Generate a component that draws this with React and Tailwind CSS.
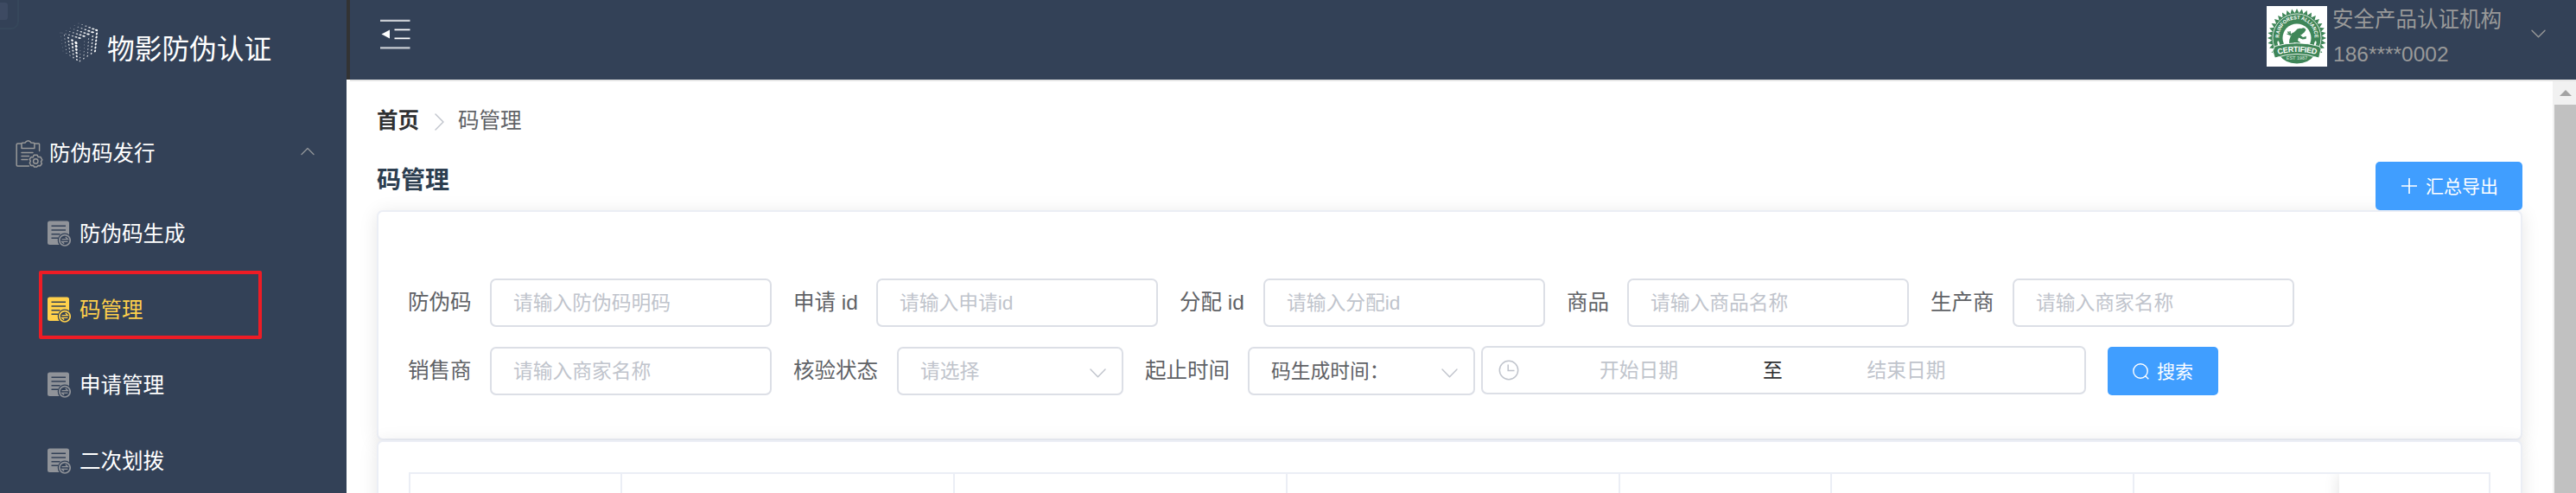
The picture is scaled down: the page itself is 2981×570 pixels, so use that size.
import React from "react";

const SANS = "font-['Liberation_Sans','Noto_Sans_CJK_SC',sans-serif]";

function lerp(a, b, t) {
  return [a[0] + (b[0] - a[0]) * t, a[1] + (b[1] - a[1]) * t];
}

function faceDots(a, b, c, d, cols, rows, size, shape) {
  const dots = [];
  for (let i = 0; i < cols; i++) {
    for (let j = 0; j < rows; j++) {
      const u = i / (cols - 1);
      const v = j / (rows - 1);
      const [x, y] = lerp(lerp(a, b, u), lerp(c, d, u), v);
      const r = size(u, v);
      dots.push({ x, y, rx: r * shape[0], ry: r * shape[1], rot: shape[2], o: Math.min(1, 0.35 + r * 0.5) });
    }
  }
  return dots;
}

const cubeDots = [
  ...faceDots([22, 1], [43, 9], [3, 12], [23, 18], 6, 5, (u, v) => 0.4 + 0.95 * u * (1 - 0.2 * v), [1.5, 0.8, 8]),
  ...faceDots([1, 12], [19, 23.5], [4, 33], [20, 43], 5, 6, (u, v) => 0.35 + 1.3 * u * (1 - 0.5 * v), [0.9, 1.15, -35]),
  ...faceDots([24, 25], [43, 13], [23.5, 44.5], [41, 33], 5, 6, (u, v) => 0.25 + 1.05 * Math.max(u * 0.95, v * 0.6), [0.8, 1.15, 30]),
];

function CubeLogo() {
  return (
    <svg className="h-[46px] w-[44px] shrink-0" viewBox="0 0 44 46" fill="#fff">
      {cubeDots.map((p, i) => (
        <ellipse key={i} cx={p.x} cy={p.y} rx={p.rx} ry={p.ry} opacity={p.o} transform={`rotate(${p.rot} ${p.x} ${p.y})`} />
      ))}
    </svg>
  );
}

function ClipboardIcon() {
  return (
    <svg className="h-[32px] w-[32px] shrink-0" viewBox="0 0 32 32" fill="none" stroke="#999" strokeWidth="1.5" strokeLinejoin="round" strokeLinecap="round">
      <path d="M6.5 4H2.5Q1.2 4 1.2 5.3V28.7Q1.2 30 2.5 30H15.5M22.5 4H26.8Q27.6 4 27.6 4.8V12.5" />
      <path d="M7 9.6V4.2Q7 3.4 7.8 3.3L11 3Q12.5 0.8 14.6 0.8Q16.7 0.8 18 3L21 3.3Q21.900 3.4 21.900 4.2V9.6Z" />
      <path d="M7 14.6H20M7 18.5H15.5M7 22.5H14" />
      <path d="M21.2 17.2H25L26.2 19.6L29 19.6L30.8 22.8L29.4 25L30.4 27.2L28.5 29.7L26 29.4L24.6 31H21.6L20.4 29.2L17.900 29.4L16.3 26.5L17.3 24.3L16.3 22L18 19.6L20.3 19.7Z" />
      <circle cx="23.3" cy="24.4" r="2.7" />
    </svg>
  );
}

function DocIcon({ color }) {
  return (
    <svg className="h-[30px] w-[27px] shrink-0" viewBox="0 0 27 30">
      <rect x="0" y="0.5" width="25" height="27.5" rx="2.5" fill={color} />
      <path d="M4.5 6.3H21M4.5 11H21M4.5 15.8H14.5M4.5 20.3H12" stroke="#334157" strokeWidth="1.5" />
      <circle cx="20" cy="22.8" r="8.3" fill="#334157" />
      <circle cx="20" cy="22.8" r="6.2" fill="none" stroke={color} strokeWidth="1.7" />
      <path d="M16.5 21.7H23.5L20.8 19M23.5 24.3H16.5L19.2 26.8" fill="none" stroke={color} strokeWidth="1.3" />
    </svg>
  );
}

function Chevron({ d, className, color, vb }) {
  return (
    <svg className={className} viewBox={vb} fill="none" stroke={color} strokeWidth="1.4" strokeLinecap="round" strokeLinejoin="round">
      <path d={d} />
    </svg>
  );
}

function SelectArrow() {
  return <Chevron className="mt-[5px] h-[11px] w-[19px]" vb="0 0 19 11" d="M1 1L9.5 9.7L18 1" color="#c0c4cc" />;
}

function MenuItem({ label, active }) {
  return (
    <li className={`flex h-[87.5px] items-center pl-[55px] text-[24.5px] leading-none ${active ? "text-[#ffd04b]" : "text-white"}`}>
      <DocIcon color={active ? "#ffd04b" : "#909399"} />
      <span className="ml-[10px] mt-[2px]">{label}</span>
    </li>
  );
}

function Sidebar() {
  return (
    <aside className="relative h-[570px] w-[401px] shrink-0 overflow-hidden bg-[#334157]">
      <div className="absolute -left-[14px] -top-[10px] h-[44px] w-[36px] rounded-[9px] border-2 border-[#36475b]" />
      <div className="absolute -left-[6px] top-[3px] h-[20px] w-[15px] rounded-[3px] bg-[#3d4a62]" />
      <div className="flex h-[98px] items-center pl-[69px]">
        <CubeLogo />
        <h1 className="ml-[11px] mt-[18px] text-[31.7px] leading-none text-white">物影防伪认证</h1>
      </div>
      <div className="mt-[36px] flex h-[87.5px] items-center pl-[18px] pr-[37px] text-[24.5px] leading-none text-white">
        <ClipboardIcon />
        <span className="ml-[7px] mt-[1px] flex-1">防伪码发行</span>
        <Chevron className="mt-[-5px] h-[10px] w-[16px]" vb="0 0 16 10" d="M1 8.5L8 1.5L15 8.5" color="#909399" />
      </div>
      <ul className="mt-[5px]">
        <MenuItem label="防伪码生成" />
        <MenuItem label="码管理" active />
        <MenuItem label="申请管理" />
        <MenuItem label="二次划拨" />
      </ul>
      <div className="absolute left-[45px] top-[313px] h-[79px] w-[258px] rounded-[2px] border-4 border-[#ee1c25]" />
    </aside>
  );
}

const teeth = Array.from({ length: 36 }, (_, i) => i)
  .flatMap((i) => {
    const p = (deg, r) => {
      const a = (deg * Math.PI) / 180;
      return `${(35 + r * Math.cos(a)).toFixed(1)},${(37 + r * Math.sin(a)).toFixed(1)}`;
    };
    return [p(i * 10, 34), p(i * 10 + 5, 29)];
  })
  .join(" ");

function Seal() {
  return (
    <svg className="h-[70px] w-[70px] shrink-0 bg-white" viewBox="0 0 70 70">
      <defs>
        <path id="sealArc" d="M15.5 42A20.5 20.5 0 1 1 54.5 42" />
        <path id="sealBand" d="M10 57Q35 49 61 57" />
      </defs>
      <polygon points={teeth} fill="#3f8658" />
      <circle cx="35" cy="37" r="27.5" fill="#3f8658" />
      <circle cx="35" cy="37" r="28" fill="none" stroke="#fff" strokeWidth="0.8" />
      <rect x="0" y="59" width="70" height="11" fill="#fff" />
      <path d="M15 57Q35 51 55 57Q49 66 35 66.5Q21 66 15 57Z" fill="#3f8658" />
      <circle cx="35" cy="37" r="16.5" fill="#fff" />
      <path d="M26 43Q26 34 33 29Q36 25 40 26Q44 24 45.5 27.5L43.5 30.5Q41 33 39 33.5L42 36L46 35L45.5 38L41.5 38.5L37 36.5L36 40L39 42L38.5 45L35 43L32 42L30 45Z" fill="#3f8658" />
      <path d="M31 31L27.5 33.5L27 29M27.5 33.5L23.5 32M27.5 33.5L24.5 29.5" stroke="#3f8658" strokeWidth="1.3" fill="none" />
      <path d="M13 45Q11.5 42 13 40Q15.5 42 15 45.5ZM57 45Q58.5 42 57 40Q54.5 42 55 45.5Z" fill="#fff" />
      <path d="M9.5 46.5Q35 39 60.5 46.5L63 49.5L60.5 60Q35 51 9.5 60L7 52Z" fill="#3f8658" stroke="#fff" strokeWidth="0.9" />
      <text fontSize="6" fontWeight="700" fill="#fff" fontFamily="Liberation Sans, sans-serif">
        <textPath href="#sealArc" startOffset="50%" textAnchor="middle" textLength="66" lengthAdjust="spacingAndGlyphs">RAINFOREST ALLIANCE</textPath>
      </text>
      <text fontSize="9" fontWeight="700" fill="#fff" fontFamily="Liberation Sans, sans-serif">
        <textPath href="#sealBand" startOffset="50%" textAnchor="middle" textLength="45">CERTIFIED</textPath>
      </text>
      <text x="35" y="62" fontSize="5.5" fontWeight="700" fill="#b7d3c0" textAnchor="middle" fontFamily="Liberation Sans, sans-serif">EST 1987</text>
    </svg>
  );
}

function Header() {
  return (
    <header className="flex h-[92px] border-l-4 border-[#333] bg-[#334157]">
      <svg className="ml-[35px] mt-[22px] h-[36px] w-[35px]" viewBox="0 0 35 36">
        <path d="M0 1.8H34.5M0 33.3H34.5" stroke="#c8ccd2" strokeWidth="2.2" />
        <path d="M16.5 12.3H34.5M16.5 22.4H34.5" stroke="#fff" strokeWidth="1.8" />
        <path d="M1.5 17.5L11 12.5V22.5Z" fill="#fff" />
      </svg>
      <div className="ml-auto mr-[35px] flex">
        <div className="mt-[7px]">
          <Seal />
        </div>
        <div className="ml-[6px] flex w-[198px] flex-col pt-[3px] text-[24.5px] leading-[40px] text-[#999]">
          <span className="whitespace-nowrap">安全产品认证机构</span>
          <span className="pl-[1px]">186****0002</span>
        </div>
        <Chevron className="ml-[32px] mt-[34px] h-[10px] w-[17px]" vb="0 0 17 10" d="M1 1.3L8.5 8.7L16 1.3" color="#999" />
      </div>
    </header>
  );
}

function Label({ children, w }) {
  return <span className={`-ml-px mr-px shrink-0 whitespace-nowrap text-[24.5px] leading-[56px] text-[#606266] ${w}`}>{children}</span>;
}

function Field({ label, w, placeholder }) {
  return (
    <div className="flex">
      <Label w={w}>{label}</Label>
      <div className="flex h-[56px] w-[326px] items-center rounded-[7px] border-2 border-[#dcdfe6] bg-white pl-[25px] text-[22.75px] leading-none text-[#c0c4cc]">
        <span>{placeholder}</span>
      </div>
    </div>
  );
}

function Select({ value, className }) {
  return (
    <div className={`flex h-[56px] items-center justify-between rounded-[7px] border-2 border-[#dcdfe6] bg-white pl-[25px] pr-[18px] text-[22.75px] leading-none ${className}`}>
      <span>{value}</span>
      <SelectArrow />
    </div>
  );
}

function DateRange() {
  return (
    <div className="-mt-px ml-[7px] flex h-[56px] w-[700px] items-center rounded-[7px] border-2 border-[#dcdfe6] bg-white pl-[18px] text-[22.75px] leading-none text-[#c0c4cc]">
      <svg className="h-[24px] w-[24px]" viewBox="0 0 24 24" fill="none" stroke="#c0c4cc" strokeWidth="1.5">
        <circle cx="12" cy="12" r="10.7" />
        <path d="M11.2 5.5V12.6H18.5" />
      </svg>
      <span className="w-[282px] pr-[5px] text-center">开始日期</span>
      <span className="w-[23px] text-[#303133]">至</span>
      <span className="w-[306px] pr-[20px] text-center">结束日期</span>
    </div>
  );
}

function SearchCard() {
  return (
    <section className="h-[266px] rounded-[7px] border-2 border-[#ebeef5] bg-white pl-[35px] pt-[77px] shadow-[0_3.5px_21px_rgba(0,0,0,0.1)]">
      <div className="flex gap-[26px]">
        <Field label="防伪码" w="w-[94px]" placeholder="请输入防伪码明码" />
        <Field label="申请 id" w="w-[95px]" placeholder="请输入申请id" />
        <Field label="分配 id" w="w-[96px]" placeholder="请输入分配id" />
        <Field label="商品" w="w-[69px]" placeholder="请输入商品名称" />
        <Field label="生产商" w="w-[94px]" placeholder="请输入商家名称" />
      </div>
      <div className="mt-[23px] flex gap-[26px]">
        <Field label="销售商" w="w-[94px]" placeholder="请输入商家名称" />
        <div className="flex">
          <Label w="w-[119px]">核验状态</Label>
          <Select value="请选择" className="w-[262px] text-[#c0c4cc]" />
        </div>
        <div className="flex">
          <Label w="w-[118px]">起止时间</Label>
          <Select value="码生成时间：" className="w-[263px] text-[#606266]" />
          <DateRange />
        </div>
        <button className="-ml-px flex h-[56px] w-[128px] items-center rounded-[5px] bg-[#409eff] pl-[29px] text-[21px] leading-none text-white">
          <svg className="h-[19px] w-[19px]" viewBox="0 0 19 19" fill="none" stroke="#fff" strokeWidth="1.4">
            <circle cx="9" cy="9" r="8.2" />
            <path d="M14.5 14.5L18.3 18.3" />
          </svg>
          <span className="ml-[9px] whitespace-nowrap">搜索</span>
        </button>
      </div>
    </section>
  );
}

const columns = ["w-[245px]", "w-[385px]", "w-[385px]", "w-[385px]", "w-[245px]", "w-[350px]"];

function TableCard() {
  return (
    <section className="h-[120px] rounded-[7px] border-2 border-[#ebeef5] bg-white pl-[35px] pr-[35px] pt-[35px] shadow-[0_3.5px_21px_rgba(0,0,0,0.1)]">
      <div className="flex h-[80px] overflow-hidden border-2 border-[#ebeef5]">
        {columns.map((w, i) => (
          <div key={i} className={`h-full shrink-0 border-r-2 border-[#ebeef5] ${w}`} />
        ))}
        <div className="ml-auto h-full w-[173px] bg-white shadow-[0_0_17px_rgba(0,0,0,0.12)]" />
      </div>
    </section>
  );
}

function Scrollbar() {
  return (
    <div className="flex w-[27px] shrink-0 flex-col bg-[#f1f1f1] pl-[2px]">
      <div className="flex h-[27px] items-center justify-center">
        <svg className="h-[7px] w-[14px]" viewBox="0 0 14 7">
          <path d="M0 7L7 0L14 7Z" fill="#a3a3a3" />
        </svg>
      </div>
      <div className="flex-1 bg-[#c1c1c1]" />
    </div>
  );
}

export default function App() {
  return (
    <div className={`flex h-[570px] w-[2981px] overflow-hidden bg-white ${SANS}`}>
      <Sidebar />
      <div className="flex min-w-0 flex-1 flex-col">
        <Header />
        <div className="ml-[4px] h-[2px] shrink-0 bg-[#e6e6e6]" />
        <div className="flex min-h-0 flex-1">
          <main className="min-w-0 flex-1 overflow-hidden pl-[35px] pr-[35px] pt-[33px]">
            <nav className="flex h-[27px] items-center text-[24.5px] leading-none">
              <span className="font-bold text-[#303133]">首页</span>
              <Chevron className="ml-[18px] h-[20px] w-[11px]" vb="0 0 11 20" d="M1 1L10 10L1 19" color="#c0c4cc" />
              <span className="ml-[16px] text-[#606266]">码管理</span>
            </nav>
            <div className="mt-[33px] flex h-[56px] justify-between">
              <h2 className="pt-[6px] text-[28px] font-bold leading-[32px] text-[#2c3e50]">码管理</h2>
              <button className="relative z-10 flex h-[56px] w-[170px] items-center rounded-[5px] bg-[#409eff] pl-[30px] text-[21px] leading-none text-white">
                <svg className="h-[18px] w-[18px]" viewBox="0 0 18 18" stroke="#fff" strokeWidth="1.6">
                  <path d="M9 0V18M0 9H18" />
                </svg>
                <span className="ml-[10px]">汇总导出</span>
              </button>
            </div>
            <SearchCard />
            <TableCard />
          </main>
          <Scrollbar />
        </div>
      </div>
    </div>
  );
}
